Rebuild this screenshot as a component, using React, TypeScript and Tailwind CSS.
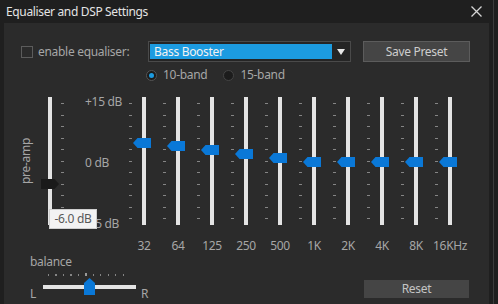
import type { CSSProperties } from "react";

type Band = { label: string; db: number };

const bands: Band[] = [
  { label: "32", db: 5 },
  { label: "64", db: 4 },
  { label: "125", db: 3 },
  { label: "250", db: 2 },
  { label: "500", db: 1 },
  { label: "1K", db: 0 },
  { label: "2K", db: 0 },
  { label: "4K", db: 0 },
  { label: "8K", db: 0 },
  { label: "16KHz", db: 0 },
];

// track is 128px tall, 0 dB sits at 64.5px, 15 dB spans ~57px
const thumbTop = (db: number): CSSProperties => ({ top: 64.5 - db * 3.8 - 5 });

function Ticks() {
  return (
    <div className="flex h-full w-[3px] flex-col justify-between py-[6px]">
      {Array.from({ length: 11 }).map((_, i) => (
        <span key={i} className="h-px w-[3px] bg-[#858585]" />
      ))}
    </div>
  );
}

function BandSlider({ band }: { band: Band }) {
  return (
    <div className="relative flex h-[128px] w-[34px]">
      <div className="ml-[2px]">
        <Ticks />
      </div>
      <div className="ml-[10px] h-full w-[4px] bg-[#e4e4e4]" />
      <svg
        className="absolute left-[6px]"
        style={thumbTop(band.db)}
        width="18"
        height="10"
        viewBox="0 0 18 10"
      >
        <path d="M0 5 L4.5 0 H18 V10 H4.5 Z" fill="#0a78d7" />
      </svg>
    </div>
  );
}

export default function App() {
  return (
    <div className="flex h-[304px] w-[498px] overflow-hidden bg-[#1f1f1f] font-['Noto_Sans',sans-serif] text-[12px] leading-[14px] tracking-[-0.3px]">
      <div className="flex w-[493px] flex-col">
        {/* Title bar */}
        <div className="flex h-[23px] items-center justify-between pl-[6px] pr-[11px]">
          <span className="text-[12px] tracking-[-0.35px] text-[#e4e4e4]">Equaliser and DSP Settings</span>
          <svg width="11" height="11" viewBox="0 0 11 11">
            <path d="M0.5 0.5 L10.5 10.5 M10.5 0.5 L0.5 10.5" stroke="#d6d6d6" strokeWidth="1.3" />
          </svg>
        </div>

        {/* Panel */}
        <div className="ml-[4px] flex w-[485px] flex-1 flex-col bg-[#2b2b2b] pt-[18px]">
          {/* Row 1 */}
          <div className="flex h-[21px] items-center">
            <div className="flex w-[144px] items-center pl-[17px]">
              <span className="h-[12px] w-[12px] border border-[#5c5c5c]" />
              <span className="ml-[5px] text-[#a6a6a6]">enable equaliser:</span>
            </div>
            <div className="flex h-[21px] w-[203px] items-stretch border border-[#4a4a4a] bg-[#252525] px-[1px] py-[2px]">
              <div className="flex w-[182px] items-center bg-[#1c9be0] pl-[4px] text-[#f2f2f2]">
                Bass Booster
              </div>
              <div className="flex flex-1 items-center justify-center">
                <svg width="8" height="6" viewBox="0 0 8 6">
                  <path d="M0 0 H8 L4 6 Z" fill="#e8e8e8" />
                </svg>
              </div>
            </div>
            <button className="ml-[12px] h-[21px] w-[107px] border border-[#5c5c5c] bg-[#454545] text-[#cdcdcd]">
              Save Preset
            </button>
          </div>

          {/* Band mode radios */}
          <div className="mt-[6px] flex h-[14px] items-center pl-[142px] text-[#a6a6a6]">
            <span className="flex h-[11px] w-[11px] items-center justify-center rounded-full border border-[#555] bg-[#1c1c1c]">
              <span className="h-[5px] w-[5px] rounded-full bg-[#1c9be0]" />
            </span>
            <span className="ml-[6px]">10-band</span>
            <span className="ml-[16px] h-[11px] w-[11px] rounded-full border border-[#444] bg-[#1c1c1c]" />
            <span className="ml-[6px]">15-band</span>
          </div>

          {/* Sliders */}
          <div className="relative mt-[15px] flex h-[128px]">
            <div className="flex w-[44px] items-center justify-center">
              <span className="-rotate-90 whitespace-nowrap text-[#a6a6a6]">pre-amp</span>
            </div>
            <div className="relative h-full w-[4px] bg-[#e4e4e4]">
              <svg className="absolute left-[-7px]" style={thumbTop(-6)} width="18" height="10" viewBox="0 0 18 10">
                <path d="M0 0 H13.5 L18 5 L13.5 10 H0 Z" fill="#1a1a1a" />
              </svg>
            </div>
            <div className="ml-[9px]">
              <Ticks />
            </div>
            <div className="ml-[21px] mt-[-2px] flex h-[136px] w-[42px] flex-col justify-between text-[#a6a6a6]">
              <span>+15 dB</span>
              <span>0 dB</span>
              <span>-15 dB</span>
            </div>
            {bands.map((b) => (
              <BandSlider key={b.label} band={b} />
            ))}

            {/* value tooltip */}
            <div className="absolute left-[45px] top-[112px] flex h-[20px] w-[48px] items-center justify-center border border-[#cfcfcf] bg-[#f3f3f3] text-[#585858]">
              -6.0 dB
            </div>
          </div>

          {/* Frequency labels */}
          <div className="mt-[14px] flex h-[14px] text-[#a6a6a6]">
            <div className="w-[123px]" />
            {bands.map((b) => (
              <span key={b.label} className="w-[34px] text-center">
                {b.label}
              </span>
            ))}
          </div>

          {/* Balance + reset */}
          <div className="mt-[2px] flex items-start">
            <div className="ml-[26px] flex flex-col text-[#a6a6a6]">
              <span>balance</span>
              <div className="mt-[4px] flex w-[100px] items-end pl-[18px]">
                {Array.from({ length: 11 }).map((_, i) => (
                  <span
                    key={i}
                    className={`mr-[6.2px] w-[2px] ${i === 5 ? "h-[3px] bg-[#9a9a9a]" : "h-[2px] bg-[#858585]"}`}
                  />
                ))}
              </div>
              <div className="mt-[2px] flex items-start">
                <span className="mt-[9px] w-[13px]">L</span>
                <div className="relative h-[17px] w-[93px]">
                  <div className="mt-[7px] h-[4px] w-full bg-[#e4e4e4]" />
                  <svg className="absolute left-[41px] top-0" width="11" height="17" viewBox="0 0 11 17">
                    <path d="M5.5 0 L11 5 V17 H0 V5 Z" fill="#0a78d7" />
                  </svg>
                </div>
                <span className="ml-[5px] mt-[9px]">R</span>
              </div>
            </div>
            <button className="ml-auto mr-[20px] mt-[25px] h-[18px] w-[105px] bg-[#454545] text-[#c4c4c4]">
              Reset
            </button>
          </div>
        </div>
      </div>
      <div className="w-px bg-[#3c3c3c]" />
    </div>
  );
}
